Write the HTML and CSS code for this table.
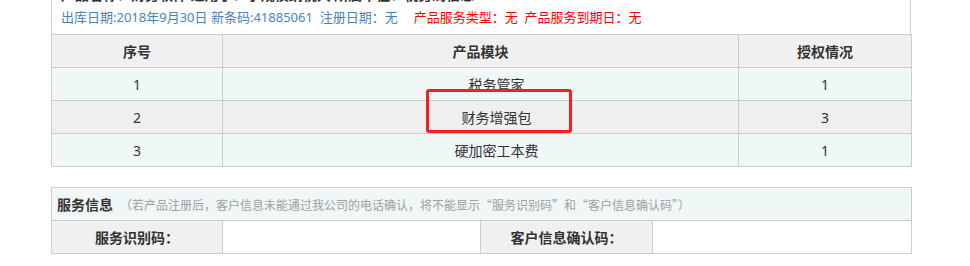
FILE: index.html
```html
<!DOCTYPE html>
<html lang="zh-CN">
<head>
<meta charset="utf-8">
<title>产品信息</title>
<link rel="stylesheet" href="styles.css">
</head>
<body>
<div class="page">
  <div class="info">
    <div class="title">产品名称：财务软件 适用于：小规模纳税人 所属单位：税务局信息</div>
    <div class="meta"><span class="blue">出库日期:2018年9月30日 新条码:41885061&nbsp; 注册日期：无</span><span class="red">产品服务类型：无&nbsp; 产品服务到期日：无</span></div>
  </div>
  <table class="grid">
    <colgroup><col class="c1"><col class="c2"><col class="c3"></colgroup>
    <tr class="head"><th>序号</th><th>产品模块</th><th>授权情况</th></tr>
    <tr class="cyan"><td>1</td><td class="mod">税务管家</td><td>1</td></tr>
    <tr class="gray"><td>2</td><td class="mod">财务增强包</td><td>3</td></tr>
    <tr class="cyan"><td>3</td><td class="mod">硬加密工本费</td><td>1</td></tr>
  </table>
  <div class="mark"></div>
  <table class="grid service">
    <colgroup><col class="s1"><col class="s2"><col class="s3"><col class="s4"></colgroup>
    <tr class="cyan"><td colspan="4" class="svc-head"><b>服务信息</b><span class="note">（若产品注册后，客户信息未能通过我公司的电话确认，将不能显示“服务识别码”和“客户信息确认码”）</span></td></tr>
    <tr><th class="label">服务识别码：</th><td class="blank"></td><th class="label">客户信息确认码：</th><td class="blank"></td></tr>
  </table>
</div>
</body>
</html>
```
FILE: styles.css
```css
html, body {
  margin: 0;
  padding: 0;
  background: #fff;
}
body {
  font-family: "Noto Sans", "Noto Sans CJK SC", sans-serif;
  color: #333;
  font-size: 14px;
}
.page {
  position: relative;
  margin-left: 51px;
  width: 860px;
}
.info {
  box-sizing: border-box;
  height: 34px;
  border-left: 1px solid #ccc;
  border-right: 1px solid #ccc;
  padding: 0 0 0 9px;
  overflow: hidden;
}
.title {
  font-weight: bold;
  font-size: 14px;
  line-height: 20px;
  margin-top: -15px;
  margin-bottom: 2px;
  color: #333;
  white-space: nowrap;
}
.meta {
  font-size: 13px;
  line-height: 20px;
  white-space: nowrap;
}
.blue { color: #4a82c0; }
.red { color: #ff0000; margin-left: 16px; }
.grid {
  width: 860px;
  border-collapse: collapse;
  table-layout: fixed;
}
.grid th, .grid td {
  border: 1px solid #cccccc;
  height: 33px;
  padding: 0;
  text-align: center;
  font-size: 14px;
  box-sizing: border-box;
}
.grid th { font-weight: bold; color: #333; }
.grid td.mod { padding-left: 32px; }
.c1 { width: 171px; }
.c2 { width: 516px; }
.c3 { width: 173px; }
.head th { background: #f0f0f0; }
.cyan td { background: #eff7f7; }
.gray td { background: #efefef; }
.service { margin-top: 20px; }
.s1 { width: 171px; }
.s2 { width: 258px; }
.s3 { width: 172px; }
.s4 { width: 259px; }
.svc-head {
  text-align: left !important;
  padding-left: 5px !important;
}
.svc-head b { font-size: 14px; color: #333; }
.note {
  font-family: "Noto Sans CJK SC", sans-serif;
  color: #a0a0a0;
  font-size: 12px;
  margin-left: 7px;
}
.label { background: #f0f0f0; }
.blank { background: #fff; }
.mark {
  position: absolute;
  left: 375px;
  top: 89px;
  width: 146px;
  height: 44px;
  box-sizing: border-box;
  border: 3px solid #f5201e;
  border-radius: 3px;
}
```
